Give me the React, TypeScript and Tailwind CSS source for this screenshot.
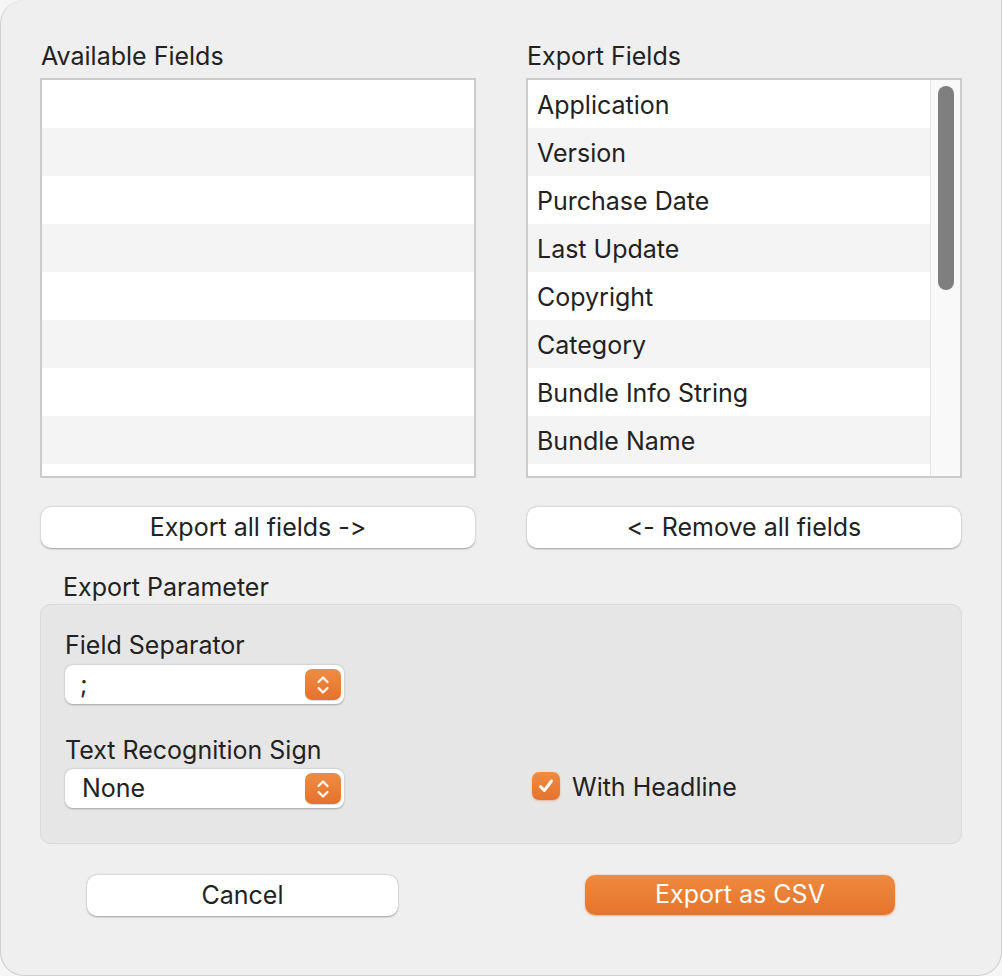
import React from "react";

const exportFields = [
  "Application",
  "Version",
  "Purchase Date",
  "Last Update",
  "Copyright",
  "Category",
  "Bundle Info String",
  "Bundle Name",
  "",
];

function Stepper() {
  return (
    <div className="w-[36px] h-[31px] rounded-[7px] bg-gradient-to-b from-[#f08c42] to-[#e5722c] flex items-center justify-center shadow-[0_1px_1px_rgba(0,0,0,0.15)]">
      <svg width="16" height="22" viewBox="0 0 16 22" fill="none">
        <path d="M3.5 8 L8 3.5 L12.5 8" stroke="white" strokeWidth="2.2" strokeLinecap="round" strokeLinejoin="round" />
        <path d="M3.5 14 L8 18.5 L12.5 14" stroke="white" strokeWidth="2.2" strokeLinecap="round" strokeLinejoin="round" />
      </svg>
    </div>
  );
}

function Select({ value, textPad }: { value: string; textPad: string }) {
  return (
    <div className="w-[279px] h-[39px] bg-white rounded-[8px] shadow-[0_0.5px_2px_rgba(0,0,0,0.3)] flex items-center justify-between pr-[3px]">
      <span className={`${textPad} text-[25px] text-[#222]`}>{value}</span>
      <Stepper />
    </div>
  );
}

function PushButton({ label, className }: { label: string; className: string }) {
  return (
    <div
      className={`h-[41px] bg-white rounded-[10px] shadow-[0_0.5px_2px_rgba(0,0,0,0.35)] flex items-center justify-center text-[25px] text-[#222] ${className}`}
    >
      {label}
    </div>
  );
}

export default function App() {
  return (
    <div
      className="w-[1002px] h-[976px] bg-[#f6f6f6] [font-feature-settings:'calt'_0,'liga'_0]"
      style={{ fontFamily: "Inter, 'Noto Sans', sans-serif" }}
    >
      <div className="w-full h-full bg-[#efefef] rounded-tl-[24px] rounded-bl-[24px] rounded-br-[24px] border-l border-b border-r border-[#cfcfcf] px-[39px] pt-[41px] flex flex-col">
        {/* Lists */}
        <div className="flex gap-[50px]">
          <div className="flex flex-col w-[436px]">
            <div className="text-[25px] text-[#222] leading-[30px] pl-[1px] h-[37px]">Available Fields</div>
            <div className="h-[400px] border-2 border-[#cbcbcb] bg-white overflow-hidden">
              {Array.from({ length: 9 }).map((_, i) => (
                <div key={i} className={`h-[48px] ${i % 2 === 1 ? "bg-[#f4f4f4]" : "bg-white"}`} />
              ))}
            </div>
          </div>
          <div className="flex flex-col w-[436px]">
            <div className="text-[25px] text-[#222] leading-[30px] pl-[1px] h-[37px]">Export Fields</div>
            <div className="h-[400px] border-2 border-[#cbcbcb] bg-white overflow-hidden flex">
              <div className="flex-1">
                {exportFields.map((f, i) => (
                  <div
                    key={i}
                    className={`h-[48px] flex items-center pl-[9px] pt-[3px] text-[25px] text-[#222] ${i % 2 === 1 ? "bg-[#f4f4f4]" : "bg-white"}`}
                  >
                    {f}
                  </div>
                ))}
              </div>
              <div className="w-[30px] bg-[#f9f9f9] border-l border-[#e4e4e4] pt-[6px] flex justify-center">
                <div className="w-[16px] h-[204px] rounded-full bg-[#7f7f7f]" />
              </div>
            </div>
          </div>
        </div>

        {/* Move buttons */}
        <div className="flex gap-[52px] mt-[29px] px-[1px]">
          <PushButton label="Export all fields ->" className="w-[434px]" />
          <PushButton label="<- Remove all fields" className="w-[434px]" />
        </div>

        {/* Export parameter */}
        <div className="mt-[24px] pl-[23px] text-[25px] text-[#222] leading-[30px]">Export Parameter</div>
        <div className="mt-[2px] w-[922px] h-[240px] bg-[#e6e6e6] border border-[#dadada] rounded-[10px] px-[24px] pt-[25px]">
          <div className="text-[25px] text-[#222] leading-[30px]">Field Separator</div>
          <div className="mt-[5px]">
            <Select value=";" textPad="pl-[15px]" />
          </div>
          <div className="flex items-end mt-[31px]">
            <div className="flex flex-col">
              <div className="text-[25px] text-[#222] leading-[30px]">Text Recognition Sign</div>
              <div className="mt-[4px]">
                <Select value="None" textPad="pl-[17px]" />
              </div>
            </div>
            <div className="flex items-center gap-[12px] ml-[188px] mb-[2px]">
              <div className="w-[28px] h-[28px] rounded-[7px] bg-gradient-to-b from-[#f08c42] to-[#e5722c] flex items-center justify-center shadow-[0_1px_2px_rgba(229,114,44,0.4)]">
                <svg width="20" height="20" viewBox="0 0 20 20" fill="none">
                  <path d="M4.5 10.5 L8.3 14.5 L15.5 5" stroke="white" strokeWidth="3" strokeLinecap="round" strokeLinejoin="round" />
                </svg>
              </div>
              <span className="text-[25px] text-[#222] pt-[2px]">With Headline</span>
            </div>
          </div>
        </div>

        {/* Footer buttons */}
        <div className="flex mt-[31px] pl-[47px]">
          <PushButton label="Cancel" className="w-[311px]" />
          <div className="ml-[187px] w-[310px] h-[40px] rounded-[10px] bg-gradient-to-b from-[#ef8a3e] to-[#e5732c] shadow-[0_0.5px_2px_rgba(229,114,44,0.5)] flex items-center justify-center text-[25px] text-white">
            Export as CSV
          </div>
        </div>
      </div>
    </div>
  );
}
